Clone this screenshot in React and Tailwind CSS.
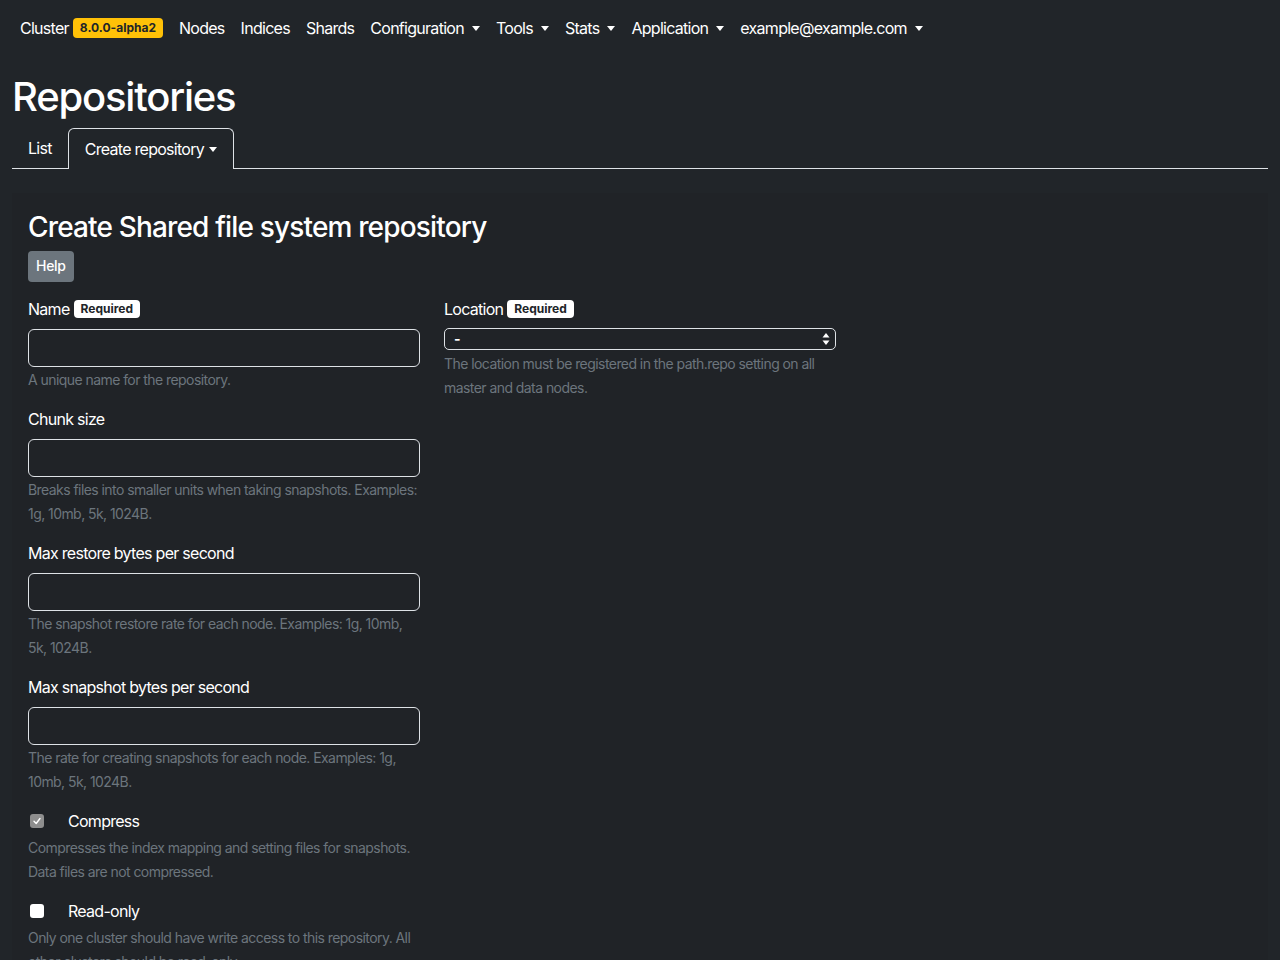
import React from "react";

function Caret({ className = "" }) {
  return (
    <span
      className={`inline-block w-0 h-0 border-t-[5px] border-t-white border-x-[4.5px] border-x-transparent align-middle ${className}`}
    />
  );
}

function NavItem({ label, dropdown }) {
  return (
    <a className="flex items-center px-2 text-white text-base">
      {label}
      {dropdown && <Caret className="ml-2" />}
    </a>
  );
}

function Required() {
  return (
    <span className="ml-1 inline-block bg-white text-[#212529] text-xs font-bold tracking-normal rounded px-[7px] py-[3px] leading-none">
      Required
    </span>
  );
}

function TextField({ label, required, help }) {
  return (
    <div className="mb-[15px]">
      <label className="flex items-center h-6 mb-2 text-base text-white">
        {label}
        {required && <Required />}
      </label>
      <input
        type="text"
        className="block w-full h-[38px] rounded-md border border-[#dee2e6] bg-transparent px-3 text-white outline-none"
      />
      <div className="mt-px text-sm leading-6 tracking-[-0.04em] text-[#6c757d]">{help}</div>
    </div>
  );
}

function CheckField({ label, checked, help }) {
  return (
    <div className="mb-[15px]">
      <div className="flex items-center h-6">
        {checked ? (
          <span className="ml-[2px] w-[14px] h-[14px] rounded-[3px] bg-[#8e8e8e] flex items-center justify-center">
            <svg width="10" height="10" viewBox="0 0 10 10" fill="none">
              <path d="M2 5.2 L4.2 7.5 L8 2.5" stroke="white" strokeWidth="1.4" strokeLinecap="round" strokeLinejoin="round" />
            </svg>
          </span>
        ) : (
          <span className="ml-[2px] w-[14px] h-[14px] rounded-[3px] bg-white" />
        )}
        <span className="ml-6 text-base text-white">{label}</span>
      </div>
      <div className="mt-[3px] text-sm leading-6 tracking-[-0.04em] text-[#6c757d]">{help}</div>
    </div>
  );
}

export default function App() {
  const navItems = [
    { label: "Nodes" },
    { label: "Indices" },
    { label: "Shards" },
    { label: "Configuration", dropdown: true },
    { label: "Tools", dropdown: true },
    { label: "Stats", dropdown: true },
    { label: "Application", dropdown: true },
    { label: "example@example.com", dropdown: true },
  ];

  return (
    <div className="min-h-screen bg-[#212529] text-white font-['Inter',sans-serif] tracking-[-0.045em]">
      {/* Navbar */}
      <nav className="h-14 flex items-center px-5">
        <div className="flex items-center mr-2">
          <span className="text-base">Cluster</span>
          <span className="ml-1 bg-[#ffc107] text-[#212529] text-xs font-bold tracking-normal rounded px-[7px] py-[3px] leading-[1.1]">
            8.0.0-alpha2
          </span>
        </div>
        {navItems.map((item) => (
          <NavItem key={item.label} {...item} />
        ))}
      </nav>

      <div className="px-3">
        <h1 className="mt-[17px] mb-[7px] text-[40px] font-medium leading-[1.2] tracking-[-0.03em]">Repositories</h1>

        {/* Tabs */}
        <div className="flex border-b border-[#dee2e6] h-[41px]">
          <a className="flex items-center px-4 text-base">List</a>
          <a className="flex items-center px-4 text-base border border-b-0 border-[#dee2e6] rounded-t-md bg-[#212529] -mb-px">
            Create repository
            <Caret className="ml-[5px]" />
          </a>
        </div>

        {/* Panel */}
        <div className="mt-6 bg-[#202327] px-4 pb-4 pt-[18px] min-h-[800px]">
          <h3 className="text-[28px] font-medium leading-[1.2] tracking-[-0.03em] mb-[6px]">
            Create Shared file system repository
          </h3>
          <button className="bg-[#6c757d] text-white text-sm font-medium tracking-[-0.02em] rounded px-2 h-[31px]">
            Help
          </button>

          <div className="mt-[15px] flex gap-6">
            <div className="w-[392px]">
              <TextField label="Name" required help="A unique name for the repository." />
              <TextField
                label="Chunk size"
                help="Breaks files into smaller units when taking snapshots. Examples: 1g, 10mb, 5k, 1024B."
              />
              <TextField
                label="Max restore bytes per second"
                help="The snapshot restore rate for each node. Examples: 1g, 10mb, 5k, 1024B."
              />
              <TextField
                label="Max snapshot bytes per second"
                help="The rate for creating snapshots for each node. Examples: 1g, 10mb, 5k, 1024B."
              />
              <CheckField
                label="Compress"
                checked
                help="Compresses the index mapping and setting files for snapshots. Data files are not compressed."
              />
              <CheckField
                label="Read-only"
                help="Only one cluster should have write access to this repository. All other clusters should be read-only."
              />
            </div>

            <div className="w-[392px]">
              <label className="flex items-center h-6 mb-[7px] text-base text-white">
                Location
                <Required />
              </label>
              <div className="flex items-center justify-between h-[22px] rounded-[5px] border border-[#dee2e6] pl-[9px] pr-[5px]">
                <span className="text-sm leading-none font-bold">-</span>
                <svg width="8" height="14" viewBox="0 0 8 14">
                  <path d="M4 1 L7.5 5.5 L0.5 5.5 Z" fill="white" />
                  <path d="M4 13 L7.5 8.5 L0.5 8.5 Z" fill="white" />
                </svg>
              </div>
              <div className="mt-[2px] text-sm leading-6 tracking-[-0.04em] text-[#6c757d]">
                The location must be registered in the path.repo setting on all master and data nodes.
              </div>
            </div>
          </div>
        </div>
      </div>
    </div>
  );
}
